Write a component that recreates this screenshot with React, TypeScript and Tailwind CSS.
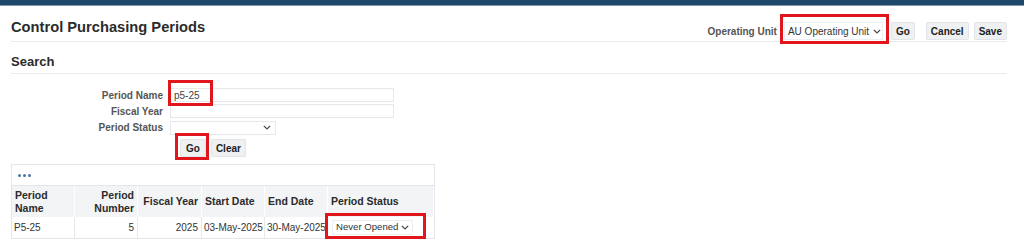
function Chevron({ className = "" }: { className?: string }) {
  return (
    <svg width="8" height="5" viewBox="0 0 8 5" className={`shrink-0 ${className}`}>
      <polyline points="0.8,0.8 4,4 7.2,0.8" fill="none" stroke="#444" strokeWidth="1.2" />
    </svg>
  );
}

function RedBox({ className }: { className: string }) {
  return <div className={`pointer-events-none absolute border-[3px] border-[#e1161c] ${className}`} />;
}

function Btn({ label, className = "" }: { label: string; className?: string }) {
  return (
    <button
      className={`flex h-[18px] items-center rounded-[2px] border border-[#e1e4e8] bg-[#eef0f2] px-[4px] text-[10px] font-bold text-[#222] ${className}`}
    >
      {label}
    </button>
  );
}

function FormRow({ label, h, children }: { label: string; h: string; children: React.ReactNode }) {
  return (
    <div className={`flex items-center ${h}`}>
      <div className="w-[152px] text-right text-[10px] font-bold text-[#555]">{label}</div>
      <div className="ml-[7px]">{children}</div>
    </div>
  );
}

const cols = ["Period\nName", "Period\nNumber", "Fiscal Year", "Start Date", "End Date", "Period Status"];

export default function App() {
  return (
    <div className="h-[248px] w-[1024px] overflow-hidden bg-white font-['Liberation_Sans',Arial,sans-serif] text-[#333]">
      <div className="h-[6px] border-b border-[#7f97ae] bg-[#1e4668]" />

      <div className="ml-[11px] mr-[17px] flex h-[36px] items-start justify-between border-b border-[#e7ebee]">
        <h1 className="mt-[11px] text-[14.7px] font-bold leading-[20px] text-[#2b2b2b]">Control Purchasing Periods</h1>
        <div className="mt-[16px] flex items-center">
          <span className="text-[10px] font-bold text-[#555]">Operating Unit</span>
          <div className="relative ml-[7px]">
            <div className="flex h-[18px] w-[99px] items-center gap-[4px] whitespace-nowrap border border-[#eceef0] bg-white pl-[3px] text-[10px] text-[#333]">
              AU Operating Unit
              <Chevron />
            </div>
            <RedBox className="-left-[4px] -top-[8px] h-[30px] w-[109px]" />
          </div>
          <Btn label="Go" className="ml-[8px]" />
          <Btn label="Cancel" className="ml-[11px]" />
          <Btn label="Save" className="ml-[5px]" />
        </div>
      </div>

      <div className="ml-[11px] mr-[17px] mt-[12px] border-b border-[#e7ebee] pb-[3px]">
        <h2 className="text-[13px] font-bold leading-[16px] text-[#2b2b2b]">Search</h2>
      </div>

      <div className="mt-[13px] ml-[11px]">
        <FormRow label="Period Name" h="h-[16px]">
          <div className="relative">
            <div className="flex h-[14px] w-[224px] items-center border border-[#e6e9ec] bg-white pl-[3px] text-[10px] text-[#444]">
              p5-25
            </div>
            <RedBox className="-left-[2px] -top-[8px] h-[26px] w-[45px]" />
          </div>
        </FormRow>
        <FormRow label="Fiscal Year" h="h-[16px]">
          <div className="h-[14px] w-[224px] border border-[#e6e9ec] bg-white" />
        </FormRow>
        <FormRow label="Period Status" h="h-[17px]">
          <div className="flex h-[14px] w-[106px] items-center justify-end border border-[#e6e9ec] bg-white pr-[4px]">
            <Chevron />
          </div>
        </FormRow>
        <div className="ml-[169px] mt-[3px] flex items-center gap-[5px]">
          <div className="relative">
            <Btn label="Go" className="h-[17px] px-[5px]" />
            <RedBox className="-left-[5px] -top-[6px] h-[27px] w-[34px]" />
          </div>
          <Btn label="Clear" className="h-[17px] px-[4px]" />
        </div>
      </div>

      <div className="ml-[11px] mt-[7px] w-[424px] border border-[#e3e7eb]">
        <div className="flex h-[20px] items-center gap-[2px] pl-[6px]">
          <span className="h-[3px] w-[3px] rounded-full bg-[#4a76a8]" />
          <span className="h-[3px] w-[3px] rounded-full bg-[#4a76a8]" />
          <span className="h-[3px] w-[3px] rounded-full bg-[#4a76a8]" />
        </div>
        <div className="grid grid-cols-[63px_63px_64px_63px_63px_1fr] border-t border-[#e3e7eb]">
          {cols.map((c, i) => (
            <div
              key={c}
              className={`flex h-[31px] items-center whitespace-pre-line border-r border-white bg-[#f3f4f6] px-[3px] text-[10.5px] font-bold leading-[13px] text-[#2b2b2b] last:border-r-0 ${
                i === 1 || i === 2 ? "justify-end text-right" : ""
              }`}
            >
              {c}
            </div>
          ))}
          <div className="flex h-[21px] items-center whitespace-nowrap border-r border-[#e6e9ec] px-[2px] text-[10px]">P5-25</div>
          <div className="flex h-[21px] items-center justify-end whitespace-nowrap border-r border-[#e6e9ec] px-[3px] text-[10px]">5</div>
          <div className="flex h-[21px] items-center justify-end whitespace-nowrap border-r border-[#e6e9ec] px-[3px] text-[10px]">2025</div>
          <div className="flex h-[21px] items-center whitespace-nowrap border-r border-[#e6e9ec] px-[2px] text-[10px]">03-May-2025</div>
          <div className="flex h-[21px] items-center whitespace-nowrap border-r border-[#e6e9ec] px-[2px] text-[10px]">30-May-2025</div>
          <div className="flex h-[21px] items-center pl-[4px]">
            <div className="relative">
              <div className="flex h-[15px] w-[81px] items-center gap-[3px] whitespace-nowrap border border-[#eceef0] bg-white pl-[3px] text-[9.6px] text-[#333]">
                Never Opened
                <Chevron />
              </div>
              <RedBox className="-left-[7px] -top-[7px] h-[26px] w-[101px]" />
            </div>
          </div>
        </div>
      </div>
    </div>
  );
}
